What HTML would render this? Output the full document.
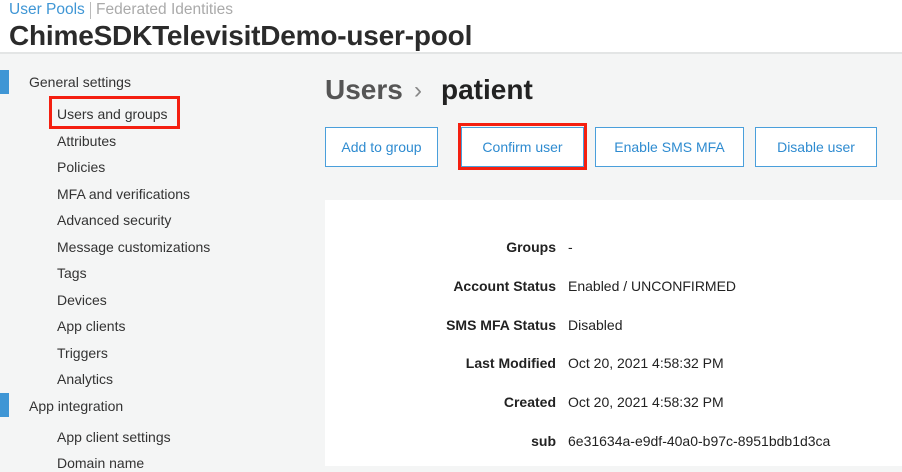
<!DOCTYPE html>
<html><head><meta charset="utf-8"><style>
*{margin:0;padding:0;box-sizing:border-box}
body{width:902px;height:466px;overflow:hidden;background:#f4f5f5;font-family:"Liberation Sans",Arial,sans-serif;position:relative;color:#333}
.a{position:absolute;white-space:nowrap}
.hdr{position:absolute;left:0;top:0;width:902px;height:54px;background:#fff;border-bottom:2px solid #e3e5e5}
.side{font-size:14px;color:#333;line-height:18px}
.bar{position:absolute;left:0;width:9px;height:24px;background:#3f96d5}
.btn{position:absolute;top:127px;height:40px;border:1px solid #4a9fdb;background:#fff;color:#2e8bd0;font-size:14px;text-align:center;line-height:38px;white-space:nowrap}
.card{position:absolute;left:325px;top:200px;width:577px;height:266px;background:#fff}
.lbl{position:absolute;right:346px;font-weight:bold;font-size:14px;color:#222;text-align:right;white-space:nowrap}
.val{position:absolute;left:568px;font-size:14px;color:#222;white-space:nowrap}
</style></head><body>
<div class="hdr"></div>
<div class="a" style="left:9px;top:1px;font-size:15.5px;line-height:18px;color:#3f96d5">User Pools</div>
<div class="a" style="left:90px;top:2px;width:1px;height:17px;background:#bbb"></div>
<div class="a" style="left:96px;top:1px;font-size:15.5px;line-height:18px;color:#aaa">Federated Identities</div>
<div class="a" style="left:9px;top:20px;font-size:28px;font-weight:bold;color:#2b2b2b;letter-spacing:-0.2px">ChimeSDKTelevisitDemo-user-pool</div>

<div class="bar" style="top:70px"></div>
<div class="bar" style="top:393px"></div>
<div class="a side" style="left:29px;top:73px">General settings</div>
<div class="a" style="left:49px;top:96px;width:131px;height:33px;border:3px solid #f41f10"></div>
<div class="a side" style="left:57px;top:105px">Users and groups</div>
<div class="a side" style="left:57px;top:132px">Attributes</div>
<div class="a side" style="left:57px;top:158px">Policies</div>
<div class="a side" style="left:57px;top:185px">MFA and verifications</div>
<div class="a side" style="left:57px;top:211px">Advanced security</div>
<div class="a side" style="left:57px;top:238px">Message customizations</div>
<div class="a side" style="left:57px;top:264px">Tags</div>
<div class="a side" style="left:57px;top:291px">Devices</div>
<div class="a side" style="left:57px;top:317px">App clients</div>
<div class="a side" style="left:57px;top:344px">Triggers</div>
<div class="a side" style="left:57px;top:370px">Analytics</div>
<div class="a side" style="left:29px;top:397px">App integration</div>
<div class="a side" style="left:57px;top:428px">App client settings</div>
<div class="a side" style="left:57px;top:454px">Domain name</div>

<div class="a" style="left:325px;top:74px;font-size:28px;font-weight:bold;color:#555">Users</div>
<div class="a" style="left:414px;top:77px;font-size:24px;color:#888">&#8250;</div>
<div class="a" style="left:441px;top:74px;font-size:28px;font-weight:bold;color:#222">patient</div>

<div class="btn" style="left:325px;width:113px">Add to group</div>
<div class="a" style="left:458px;top:123px;width:129px;height:47px;border:3px solid #f41f10"></div>
<div class="btn" style="left:461px;width:123px;top:127px">Confirm user</div>
<div class="btn" style="left:595px;width:149px">Enable SMS MFA</div>
<div class="btn" style="left:755px;width:122px">Disable user</div>

<div class="card"></div>
<div class="lbl" style="top:239px">Groups</div><div class="val" style="top:239px">-</div>
<div class="lbl" style="top:278px">Account Status</div><div class="val" style="top:278px">Enabled / UNCONFIRMED</div>
<div class="lbl" style="top:317px">SMS MFA Status</div><div class="val" style="top:317px">Disabled</div>
<div class="lbl" style="top:355px">Last Modified</div><div class="val" style="top:355px">Oct 20, 2021 4:58:32 PM</div>
<div class="lbl" style="top:394px">Created</div><div class="val" style="top:394px">Oct 20, 2021 4:58:32 PM</div>
<div class="lbl" style="top:433px">sub</div><div class="val" style="top:433px">6e31634a-e9df-40a0-b97c-8951bdb1d3ca</div>
</body></html>
